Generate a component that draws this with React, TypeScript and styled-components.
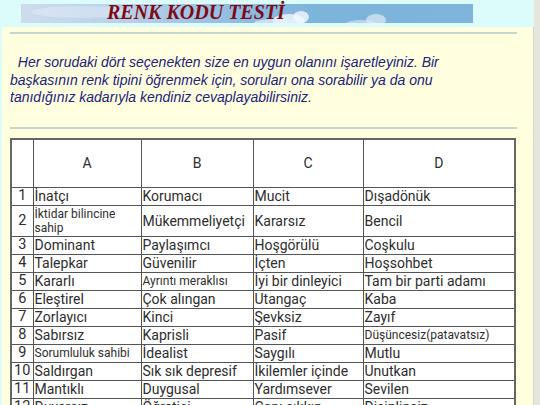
import styled, { createGlobalStyle } from 'styled-components';

const GlobalStyle = createGlobalStyle`
  html, body {
    margin: 0;
    padding: 0;
    background: #e6e6de;
  }
  body {
    width: 540px;
    height: 405px;
    overflow: hidden;
  }
`;

const rows: { n: string; cells: { text: string; small?: boolean }[]; tall?: boolean }[] = [
  { n: '1', cells: [{ text: 'İnatçı' }, { text: 'Korumacı' }, { text: 'Mucit' }, { text: 'Dışadönük' }] },
  {
    n: '2',
    tall: true,
    cells: [{ text: 'İktidar bilincine sahip', small: true }, { text: 'Mükemmeliyetçi' }, { text: 'Kararsız' }, { text: 'Bencil' }],
  },
  { n: '3', cells: [{ text: 'Dominant' }, { text: 'Paylaşımcı' }, { text: 'Hoşgörülü' }, { text: 'Coşkulu' }] },
  { n: '4', cells: [{ text: 'Talepkar' }, { text: 'Güvenilir' }, { text: 'İçten' }, { text: 'Hoşsohbet' }] },
  { n: '5', cells: [{ text: 'Kararlı' }, { text: 'Ayrıntı meraklısı', small: true }, { text: 'İyi bir dinleyici' }, { text: 'Tam bir parti adamı' }] },
  { n: '6', cells: [{ text: 'Eleştirel' }, { text: 'Çok alıngan' }, { text: 'Utangaç' }, { text: 'Kaba' }] },
  { n: '7', cells: [{ text: 'Zorlayıcı' }, { text: 'Kinci' }, { text: 'Şevksiz' }, { text: 'Zayıf' }] },
  { n: '8', cells: [{ text: 'Sabırsız' }, { text: 'Kaprisli' }, { text: 'Pasif' }, { text: 'Düşüncesiz(patavatsız)', small: true }] },
  { n: '9', cells: [{ text: 'Sorumluluk sahibi', small: true }, { text: 'İdealist' }, { text: 'Saygılı' }, { text: 'Mutlu' }] },
  { n: '10', cells: [{ text: 'Saldırgan' }, { text: 'Sık sık depresif' }, { text: 'İkilemler içinde' }, { text: 'Unutkan' }] },
  { n: '11', cells: [{ text: 'Mantıklı' }, { text: 'Duygusal' }, { text: 'Yardımsever' }, { text: 'Sevilen' }] },
  { n: '12', cells: [{ text: 'Duyarsız' }, { text: 'Öğretici' }, { text: 'Canı sıkkın' }, { text: 'Disiplinsiz' }] },
];

const Page = styled.div`
  width: 534px;
  background: #dcfcfc;
  display: flex;
  flex-direction: column;
`;

const Header = styled.header`
  height: 27px;
  padding: 4px 0 0 21px;
  box-sizing: border-box;
`;

const Banner = styled.div`
  position: relative;
  width: 452px;
  height: 19px;
  background: linear-gradient(90deg, #cddced 0%, #b7cfe8 25%, #94bee2 45%, #7db4dc 65%, #7fb4dc 100%);
  overflow: visible;
`;

const Clouds = styled.svg`
  position: absolute;
  left: 0;
  top: 0;
`;

const Title = styled.h1`
  position: absolute;
  left: 86px;
  top: -4px;
  margin: 0;
  font-family: 'Liberation Serif', 'Times New Roman', serif;
  font-style: italic;
  font-weight: bold;
  font-size: 20px;
  line-height: 24px;
  color: #7d0a14;
  white-space: nowrap;
`;

const Content = styled.main`
  margin-left: 2px;
  background: #ffffe0;
  border-right: 1px solid #d6d6c6;
  padding: 5px 16px 0 8px;
  height: 378px;
  box-sizing: border-box;
  overflow: hidden;
`;

const Rule = styled.hr`
  margin: 0;
  border: 0;
  height: 2px;
  background: #c5d6cc;
`;

const Intro = styled.p`
  margin: 0;
  max-width: 448px;
  padding: 20px 0 20px;
  font-family: 'Liberation Sans', Arial, sans-serif;
  font-style: italic;
  font-size: 14px;
  line-height: 17.5px;
  color: #22227a;
`;

const Table = styled.table`
  margin-top: 9px;
  width: 504px;
  border-collapse: collapse;
  background: #fff;
  border: 2px solid #666;
  font-family: Roboto, 'Noto Sans', sans-serif;
  color: #2e2e2e;
  table-layout: fixed;
`;

const HeadCell = styled.th`
  height: 47px;
  border: 1px solid #555;
  font-weight: normal;
  font-size: 14px;
  text-align: center;
  padding: 0;
`;

const NumCell = styled.td`
  border: 1px solid #555;
  font-size: 14.5px;
  line-height: 16px;
  text-align: center;
  padding: 0;
`;

const Cell = styled.td<{ $small?: boolean; $tall?: boolean }>`
  border: 1px solid #555;
  height: ${({ $tall }) => ($tall ? '30px' : '17px')};
  font-size: ${({ $small }) => ($small ? '12px' : '14px')};
  line-height: ${({ $small }) => ($small ? '14px' : '16px')};
  padding: 0 1px;
  text-align: left;
  white-space: ${({ $small }) => ($small ? 'normal' : 'nowrap')};
  overflow: hidden;
`;

const App = () => {
  return (
    <>
      <GlobalStyle />
      <Page>
        <Header>
          <Banner>
            <Clouds width='452' height='19' viewBox='0 0 452 19'>
              <ellipse cx='268' cy='17' rx='16' ry='7' fill='#eef4fa' opacity='0.85' />
              <ellipse cx='280' cy='13' rx='8' ry='6' fill='#f4f8fc' opacity='0.8' />
              <ellipse cx='255' cy='19' rx='22' ry='4' fill='#e6eff8' opacity='0.7' />
              <ellipse cx='355' cy='16' rx='10' ry='6' fill='#dfeaf5' opacity='0.7' />
              <ellipse cx='340' cy='19' rx='14' ry='3' fill='#dfeaf5' opacity='0.6' />
              <ellipse cx='60' cy='8' rx='50' ry='6' fill='#e2ecf5' opacity='0.5' />
            </Clouds>
            <Title>RENK KODU TESTİ</Title>
          </Banner>
        </Header>
        <Content>
          <Rule />
          <Intro>
            &nbsp; Her sorudaki dört seçenekten size en uygun olanını işaretleyiniz. Bir başkasının renk tipini
            öğrenmek için, soruları ona sorabilir ya da onu tanıdığınız kadarıyla kendiniz cevaplayabilirsiniz.
          </Intro>
          <Rule />
          <Table>
            <colgroup>
              <col style={{ width: 22 }} />
              <col style={{ width: 108 }} />
              <col style={{ width: 112 }} />
              <col style={{ width: 110 }} />
              <col style={{ width: 152 }} />
            </colgroup>
            <thead>
              <tr>
                <HeadCell />
                <HeadCell>A</HeadCell>
                <HeadCell>B</HeadCell>
                <HeadCell>C</HeadCell>
                <HeadCell>D</HeadCell>
              </tr>
            </thead>
            <tbody>
              {rows.map((row) => (
                <tr key={row.n}>
                  <NumCell>{row.n}</NumCell>
                  {row.cells.map((c, i) => (
                    <Cell key={i} $small={c.small} $tall={row.tall}>
                      {c.text}
                    </Cell>
                  ))}
                </tr>
              ))}
            </tbody>
          </Table>
        </Content>
      </Page>
    </>
  );
};

export default App;
